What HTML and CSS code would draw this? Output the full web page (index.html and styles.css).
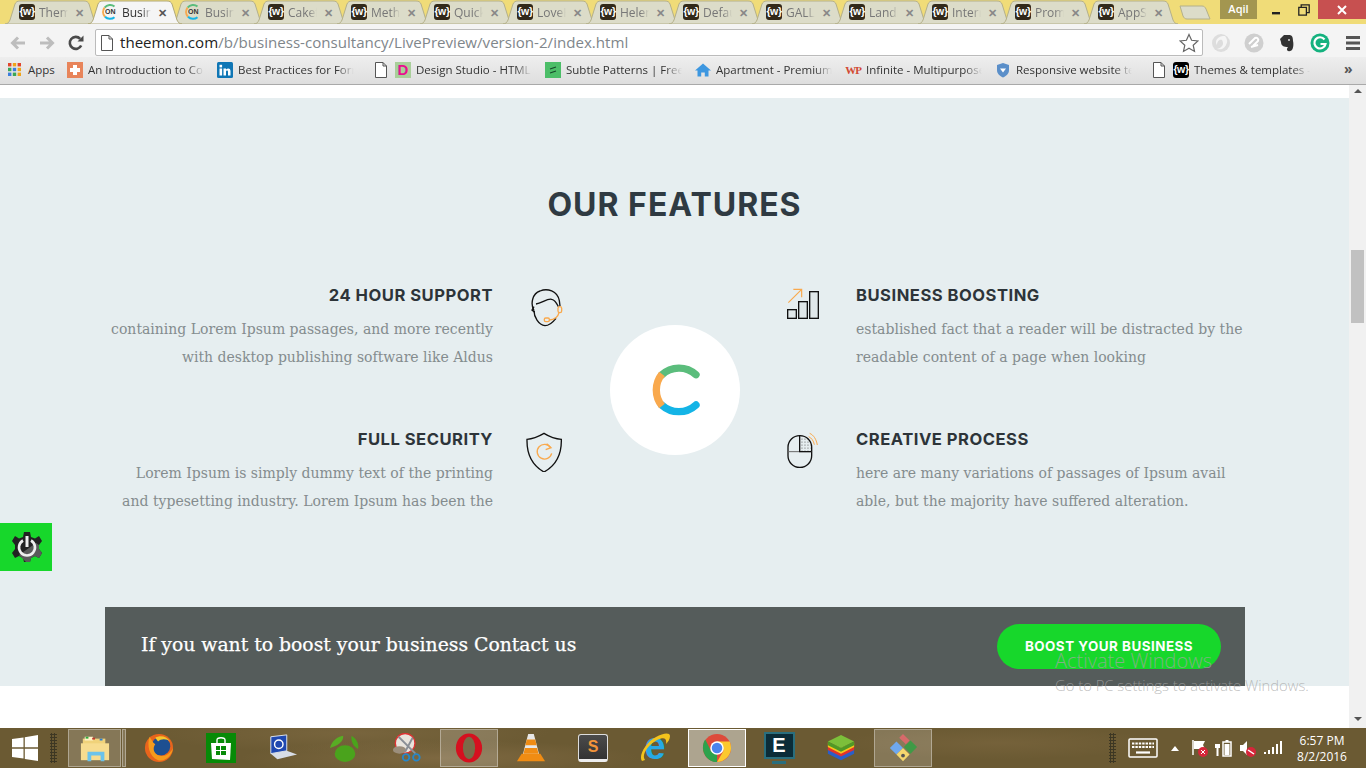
FILE: index.html
```html
<!DOCTYPE html>
<html lang="en">
<head>
<meta charset="utf-8">
<title>Business Consultancy</title>
<link rel="stylesheet" href="styles.css">
</head>
<body>
<svg class="defs" width="0" height="0" aria-hidden="true">
  <symbol id="tabshape" viewBox="0 0 94 24" preserveAspectRatio="none">
    <path d="M0 24 C3 24 4 22 5 20 L10 4 C11 2 12 1 15 1 H79 C82 1 83 2 84 4 L89 20 C90 22 91 24 94 24 Z"/>
  </symbol>
  <symbol id="doc" viewBox="0 0 12 16">
    <path d="M.5.5H8L11.5 4V15.5H.5Z M8 .5V4H11.5" fill="#fff" stroke="#555" stroke-width="1"/>
  </symbol>
  <symbol id="onlogo" viewBox="0 0 16 16">
    <path d="M12.5 2.600A7 7 0 0 0 2.600 3.600" fill="none" stroke="#5bbd7c" stroke-width="2"/>
    <path d="M2.600 3.600A7 7 0 0 0 3 12.800" fill="none" stroke="#f7a94f" stroke-width="2"/>
    <path d="M3 12.800A7 7 0 0 0 12.500 13.200" fill="none" stroke="#14b4e6" stroke-width="2"/>
  </symbol>
</svg>

<header class="chrome">
  <div class="tabstrip">
    <div class="tabs">
      <div class="tab"><svg class="tabbg"><use href="#tabshape"/></svg><span class="fav">{w}</span><span class="tlabel">Theme</span><span class="tclose">✕</span></div>
      <div class="tab active"><svg class="tabbg"><use href="#tabshape"/></svg><span class="fav on"><svg class="onsvg"><use href="#onlogo"/></svg><span class="ontext">ON</span></span><span class="tlabel">Busine</span><span class="tclose">✕</span></div>
      <div class="tab"><svg class="tabbg"><use href="#tabshape"/></svg><span class="fav on"><svg class="onsvg"><use href="#onlogo"/></svg><span class="ontext">ON</span></span><span class="tlabel">Busine</span><span class="tclose">✕</span></div>
      <div class="tab"><svg class="tabbg"><use href="#tabshape"/></svg><span class="fav">{w}</span><span class="tlabel">Cakef</span><span class="tclose">✕</span></div>
      <div class="tab"><svg class="tabbg"><use href="#tabshape"/></svg><span class="fav">{w}</span><span class="tlabel">Metho</span><span class="tclose">✕</span></div>
      <div class="tab"><svg class="tabbg"><use href="#tabshape"/></svg><span class="fav">{w}</span><span class="tlabel">Quick</span><span class="tclose">✕</span></div>
      <div class="tab"><svg class="tabbg"><use href="#tabshape"/></svg><span class="fav">{w}</span><span class="tlabel">LoveH</span><span class="tclose">✕</span></div>
      <div class="tab"><svg class="tabbg"><use href="#tabshape"/></svg><span class="fav">{w}</span><span class="tlabel">Helen</span><span class="tclose">✕</span></div>
      <div class="tab"><svg class="tabbg"><use href="#tabshape"/></svg><span class="fav">{w}</span><span class="tlabel">Defau</span><span class="tclose">✕</span></div>
      <div class="tab"><svg class="tabbg"><use href="#tabshape"/></svg><span class="fav">{w}</span><span class="tlabel">GALLE</span><span class="tclose">✕</span></div>
      <div class="tab"><svg class="tabbg"><use href="#tabshape"/></svg><span class="fav">{w}</span><span class="tlabel">Landi</span><span class="tclose">✕</span></div>
      <div class="tab"><svg class="tabbg"><use href="#tabshape"/></svg><span class="fav">{w}</span><span class="tlabel">Intern</span><span class="tclose">✕</span></div>
      <div class="tab"><svg class="tabbg"><use href="#tabshape"/></svg><span class="fav">{w}</span><span class="tlabel">Prom</span><span class="tclose">✕</span></div>
      <div class="tab"><svg class="tabbg"><use href="#tabshape"/></svg><span class="fav">{w}</span><span class="tlabel">AppS</span><span class="tclose">✕</span></div>
      <svg class="newtab" viewBox="0 0 32 15"><path d="M1 1H23C25 1 26 2 27 4L31 14H8C6 14 5 13 4 11Z"/></svg>
    </div>
    <div class="winbar">
      <span class="user">Aqil</span>
      <span class="winbtn minbtn"><svg width="10" height="10" viewBox="0 0 10 10"><rect x="1" y="7" width="8" height="2.400" fill="#222"/></svg></span>
      <span class="winbtn maxbtn"><svg width="12" height="12" viewBox="0 0 12 12"><path d="M.8 3.400H8.400V11.200H.8Z M3.200 3.400V.8H11.200V8.600H8.400" fill="none" stroke="#222" stroke-width="1.300"/></svg></span>
      <span class="winbtn closebtn"><svg width="10" height="10" viewBox="0 0 10 10"><path d="M1 1L9 9M9 1L1 9" stroke="#fff" stroke-width="2"/></svg></span>
    </div>
  </div>

  <div class="toolbar">
    <svg class="navicon" viewBox="0 0 18 18"><path d="M16 9H4M9 3.500L3.500 9L9 14.500" fill="none" stroke="#bdbdbd" stroke-width="3"/></svg>
    <svg class="navicon" viewBox="0 0 18 18"><path d="M2 9H14M9 3.500L14.500 9L9 14.500" fill="none" stroke="#bdbdbd" stroke-width="3"/></svg>
    <svg class="navicon" viewBox="0 0 18 18"><path d="M14.200 11.500A6 6 0 1 1 13.200 4.800" fill="none" stroke="#4a4a4a" stroke-width="2.600"/><path d="M10.500 7.500H16.500V1.500Z" fill="#4a4a4a"/></svg>
    <div class="omnibox">
      <svg class="omnidoc"><use href="#doc"/></svg>
      <span class="url"><span class="host">theemon.com</span>/b/business-consultancy/LivePreview/version-2/index.html</span>
      <svg class="star" viewBox="0 0 20 20"><path d="M10 1.500L12.600 7.300L18.900 8L14.200 12.200L15.500 18.400L10 15.200L4.500 18.400L5.800 12.200L1.100 8L7.400 7.300Z" fill="#fff" stroke="#666" stroke-width="1.200"/></svg>
    </div>
    <div class="exts">
      <svg class="ext" viewBox="0 0 20 20"><circle cx="10" cy="10" r="9" fill="#ddd"/><path d="M14 3A8 8 0 0 1 6 16C10 15 14 12 11 7C8 6 6 9 6 12C3 8 7 2 14 3Z" fill="#f5f5f5"/></svg>
      <svg class="ext" viewBox="0 0 20 20"><circle cx="10" cy="10" r="9.500" fill="#cfcfcf"/><path d="M5 11L11 5C13 4 15 6 14 8L9 13M7 14L14 12" fill="none" stroke="#fff" stroke-width="2"/></svg>
      <svg class="ext" viewBox="0 0 20 20"><path d="M3 6L7 2H12C15 2 16 4 16 8C17 12 16 18 13 18C10 19 9 16 11 14C7 14 4 13 4 9Z" fill="#333"/><circle cx="12" cy="7" r="1" fill="#ddd"/></svg>
      <svg class="ext" viewBox="0 0 20 20"><circle cx="10" cy="10" r="9.500" fill="#15b27f"/><path d="M14.500 6.500A5.600 5.600 0 1 0 15.500 11H10.500" fill="none" stroke="#fff" stroke-width="2.200"/></svg>
      <svg class="ext" viewBox="0 0 20 20"><path d="M3 4.500H17M3 10H17M3 15.500H17" stroke="#555" stroke-width="3"/></svg>
    </div>
  </div>

  <nav class="bookmarks">
    <div class="bm bm-apps">
      <svg class="appsgrid" viewBox="0 0 13 13"><rect width="3.400" height="3.400" fill="#e2452c"/><rect x="4.800" width="3.400" height="3.400" fill="#f0a419"/><rect x="9.600" width="3.400" height="3.400" fill="#e2452c"/><rect y="4.800" width="3.400" height="3.400" fill="#3aa655"/><rect x="4.800" y="4.800" width="3.400" height="3.400" fill="#3b7ddd"/><rect x="9.600" y="4.800" width="3.400" height="3.400" fill="#f0a419"/><rect y="9.600" width="3.400" height="3.400" fill="#3b7ddd"/><rect x="4.800" y="9.600" width="3.400" height="3.400" fill="#3aa655"/><rect x="9.600" y="9.600" width="3.400" height="3.400" fill="#f0a419"/></svg>
      <span class="bmapps">Apps</span>
    </div>
    <div class="bm"><svg class="bmicon" viewBox="0 0 16 16"><rect width="16" height="16" fill="#e8845a"/><path d="M6 3H10V6H13V10H10V13H6V10H3V6H6Z" fill="#fff"/></svg><span class="bmlabel">An Introduction to Color</span></div>
    <div class="bm"><svg class="bmicon" viewBox="0 0 16 16"><rect width="16" height="16" rx="1.500" fill="#0f76b5"/><rect x="2.500" y="6.500" width="2.600" height="7" fill="#fff"/><rect x="2.500" y="2.800" width="2.600" height="2.600" fill="#fff"/><path d="M6.500 6.500H9V7.600C10.500 5.800 13.500 6 13.500 9V13.500H11V9.600C11 8 9 8 9 9.600V13.500H6.500Z" fill="#fff"/></svg><span class="bmlabel">Best Practices for Form</span></div>
    <div class="bm bm-doc"><svg class="bmdoc"><use href="#doc"/></svg></div>
    <div class="bm"><span class="bmicon dicon">D</span><span class="bmlabel">Design Studio - HTML</span></div>
    <div class="bm"><svg class="bmicon" viewBox="0 0 16 16"><rect width="16" height="16" fill="#4cbe68"/><path d="M5 7L11 5M5 11L11 9" stroke="#17482a" stroke-width="1.200"/></svg><span class="bmlabel">Subtle Patterns | Free Pat</span></div>
    <div class="bm"><svg class="bmicon" viewBox="0 0 16 16"><path d="M8 1.500L16 8.500H13.500V14.500H9.800V10.500H6.200V14.500H2.500V8.500H0Z" fill="#3d97e0"/></svg><span class="bmlabel">Apartment - Premium</span></div>
    <div class="bm"><span class="bmicon wpicon">WP</span><span class="bmlabel">Infinite - Multipurpose</span></div>
    <div class="bm"><svg class="bmicon" viewBox="0 0 16 16"><path d="M8 1L14 3V8C14 12 11 14 8 15.500C5 14 2 12 2 8V3Z" fill="#5b8fc9"/><path d="M5 6.500H11L8 10.500Z" fill="#fff"/></svg><span class="bmlabel">Responsive website tem</span></div>
    <div class="bm bm-doc"><svg class="bmdoc"><use href="#doc"/></svg></div>
    <div class="bm"><span class="fav black">{w}</span><span class="bmlabel wlabel">Themes &amp; templates - W</span></div>
    <span class="more">»</span>
  </nav>
</header>

<div class="viewport">
  <main class="page">
    <section class="features">
      <h2 class="title">OUR FEATURES</h2>
      <div class="fgrid">
        <div class="ftext left r1">
          <h3>24 HOUR SUPPORT</h3>
          <p>containing Lorem Ipsum passages, and more recently<br>with desktop publishing software like Aldus</p>
        </div>
        <div class="ficon ficon-l r1">
          <svg viewBox="45 54 120 120" class="fsvg"><g fill="none" stroke="#111" stroke-width="4"><path d="M72 122C60 100 68 70 90 63C112 54 142 62 148 92L150 108"/><path d="M72 122C72 140 85 165 105 167C120 167 130 155 138 145"/><path d="M78 102C95 100 113 84 125 88C136 90 140 100 145 110"/><path d="M72 110L66 120L74 127"/></g><g fill="none" stroke="#f9a94d" stroke-width="4"><rect x="144" y="110" width="11" height="18" rx="5"/><path d="M147 128C144 141 136 149 118 150"/><rect x="103" y="144" width="15" height="11" rx="4"/></g></svg>
        </div>
        <div class="fcenter">
          <svg viewBox="300 165 390 390" class="flogo"><circle cx="495" cy="360" r="195" fill="#fff"/><g fill="none" stroke-width="22"><path d="M558 314A76 76 0 0 0 455 315" stroke="#5bbd7c" stroke-linecap="round"/><path d="M558 405A76 76 0 0 1 455 405" stroke="#14b4e6" stroke-linecap="round"/><path d="M456 312A76 76 0 0 0 456 408" stroke="#f9a94d"/></g></svg>
        </div>
        <div class="ficon ficon-r r1">
          <svg viewBox="819 54 120 120" class="fsvg"><g fill="#dfe7e9" stroke="#111" stroke-width="4"><rect x="833" y="119" width="26" height="26"/><rect x="866" y="95" width="26" height="50"/><rect x="899" y="65" width="26" height="80"/></g><path d="M835 98L875 58M850 58H875V82" fill="none" stroke="#f9a94d" stroke-width="3.500"/></svg>
        </div>
        <div class="ftext r1">
          <h3>BUSINESS BOOSTING</h3>
          <p>established fact that a reader will be distracted by the<br>readable content of a page when looking</p>
        </div>
        <div class="ftext left r2">
          <h3>FULL SECURITY</h3>
          <p>Lorem Ipsum is simply dummy text of the printing<br>and typesetting industry. Lorem Ipsum has been the</p>
        </div>
        <div class="ficon ficon-l r2">
          <svg viewBox="45 486 120 120" class="fsvg"><path d="M102 490C85 500 68 507 51 508C50 550 65 585 102 606C140 585 155 550 154 508C135 507 118 500 102 490Z" fill="none" stroke="#111" stroke-width="4"/><path d="M122 533A22 22 0 1 0 125 550" fill="none" stroke="#f9a94d" stroke-width="4"/><path d="M110 521L123 533L107 539" fill="none" stroke="#f9a94d" stroke-width="4"/></svg>
        </div>
        <div class="ficon ficon-r r2">
          <svg viewBox="819 486 120 120" class="fsvg"><defs><pattern id="dots" width="9" height="9" patternUnits="userSpaceOnUse"><circle cx="3" cy="3" r="1.600" fill="#444"/></pattern></defs><path d="M870 498C890 498 904 512 904 545H870Z" fill="url(#dots)"/><rect x="834" y="497" width="71" height="95" rx="35" fill="none" stroke="#111" stroke-width="4"/><path d="M834 545H905" stroke="#666" stroke-width="3"/><path d="M869 497V545H905" fill="none" stroke="#111" stroke-width="4"/><path d="M896 500C905 504 911 513 913 524M899 490C911 495 919 508 922 525" fill="none" stroke="#f9a94d" stroke-width="3"/></svg>
        </div>
        <div class="ftext r2">
          <h3>CREATIVE PROCESS</h3>
          <p>here are many variations of passages of Ipsum avail<br>able, but the majority have suffered alteration.</p>
        </div>
      </div>
      <div class="cta">
        <p class="ctatext">If you want to boost your business Contact us</p>
        <a class="ctabtn">BOOST YOUR BUSINESS</a>
      </div>
    </section>
  </main>
  <aside class="scrollbar">
    <span class="sarrow up"></span>
    <span class="sthumb"></span>
    <span class="sarrow down"></span>
  </aside>
  <div class="gearwidget">
    <svg viewBox="0 0 32 32" class="gearsvg"><path d="M13 1H19L20 6L24 7.500L28 5L31 10L28 14V18L31 22L28 27L24 25L20 27L19 31H13L12 27L8 25L4 27L1 22L4 18V14L1 10L4 5L8 7.500L12 6Z" fill="#222"/><path d="M25 12L28 14V18L31 22L28 27L24 25L20 27L19 31H15L8 24Z" fill="#5a5a5a"/><path d="M12 9.500A8 8 0 1 0 20 9.500" fill="none" stroke="#eee" stroke-width="2.600"/><rect x="14.500" y="5" width="3" height="11" fill="#eee"/></svg>
  </div>
</div>

<footer class="taskbar">
  <svg class="winlogo" viewBox="0 0 26 26"><path d="M0 4L11.500 2.400V12.300H0ZM12.800 2.200L26 0V12.300H12.800ZM0 13.700H11.500V23.600L0 22ZM12.800 13.700H26V26L12.800 24Z" fill="#fff"/></svg>
  <span class="grip"></span>
  <span class="tbox explorer">
    <svg class="tbicon" viewBox="0 0 32 32"><path d="M3 6H27V27H3Z" fill="#f0d27a"/><path d="M5 4H14V8H5Z" fill="#fff3c8"/><rect x="6" y="4" width="3" height="2" fill="#2faa3c"/><rect x="13" y="5" width="3" height="2" fill="#c0392b"/><rect x="21" y="6" width="3" height="2" fill="#2b7fd0"/><path d="M1 11H31V29H1Z" fill="#f7dc8f"/><path d="M8 20H26V30H22V24H12V30H8Z" fill="#6cc3ea"/></svg>
  </span>
  <span class="tbox narrow"></span>
  <span class="slot"><svg class="tbicon" viewBox="0 0 32 32"><circle cx="16" cy="16" r="15" fill="#e8641c"/><circle cx="18" cy="14" r="10" fill="#1d4f91"/><path d="M6 4C3 12 5 25 15 29C24 31 30 23 31 16C28 22 22 26 16 24C10 22 9 16 12 12C9 10 8 7 6 4Z" fill="#f59b1d"/><path d="M12 5C17 2 24 3 28 9C24 6 18 6 15 9Z" fill="#f7c52d"/></svg></span>
  <span class="slot"><svg class="tbicon" viewBox="0 0 30 30"><rect width="30" height="30" fill="#078a07"/><path d="M11 11V7C11 4 19 4 19 7V11" fill="none" stroke="#fff" stroke-width="1.400"/><path d="M5 10H25L24 27L6 26Z" fill="#fff"/><path d="M10 13H14V17H10ZM15 13H20V17H15ZM10 18H14V22H10ZM15 18H20V22H15Z" fill="#078a07"/></svg></span>
  <span class="slot"><svg class="tbicon" viewBox="0 0 32 32"><path d="M3 4L20 2V19L3 22Z" fill="#1f48b0" stroke="#dfe6f2"/><circle cx="11.500" cy="12" r="4.500" fill="none" stroke="#fff" stroke-width="1.500"/><path d="M3 22L20 19L31 23L10 28Z" fill="#d8dde6"/></svg></span>
  <span class="slot"><svg class="tbicon" viewBox="0 0 32 32"><ellipse cx="16" cy="22" rx="11" ry="9" fill="#4aa31c"/><path d="M0 16C2 8 8 4 14 3C15 9 8 14 0 16Z" fill="#58ad24"/><path d="M23 3C28 6 31 11 30 17C25 15 22 9 23 3Z" fill="#4aa31c"/></svg></span>
  <span class="slot"><svg class="tbicon" viewBox="0 0 32 32"><circle cx="14" cy="11" r="10.500" fill="#e8e4dc" stroke="#d33" stroke-width="1.500"/><ellipse cx="8" cy="18" rx="7" ry="4" fill="#9b8e7c"/><path d="M7 4L25 22M22 5L14 20" stroke="#8a8f96" stroke-width="2"/><circle cx="15" cy="26" r="3.500" fill="none" stroke="#2787c9" stroke-width="2"/><circle cx="26" cy="26" r="3.500" fill="none" stroke="#2787c9" stroke-width="2"/></svg></span>
  <span class="slot"><span class="tbox wide58"><svg class="tbicon" viewBox="0 0 32 32"><ellipse cx="16" cy="16" rx="14" ry="15.500" fill="#d5101f"/><ellipse cx="16" cy="16" rx="6.500" ry="12" fill="#7a6a48"/></svg></span></span>
  <span class="slot"><svg class="tbicon" viewBox="0 0 32 32"><path d="M13 1H19L25 24H7Z" fill="#e8e8e8"/><path d="M11.500 7H20.500L22 13H10ZM9.500 16H22.500L24 22H8Z" fill="#f08c13"/><path d="M6 22H26L31 30H1Z" fill="#f08c13"/></svg></span>
  <span class="slot"><span class="sublime"><span class="sublimes">S</span></span></span>
  <span class="slot"><span class="ielogo"><span class="ielet">e</span><svg class="iering" viewBox="0 0 32 32"><path d="M3 29C-1 24 7 10 17 5C24 1 31 0 31 4C31 7 29 10 27 12C28 6 25 5 18 8C9 13 2 23 6 28Z" fill="#f3c31d"/></svg></span></span>
  <span class="slot"><span class="tbox wide58 bright"><svg class="tbicon" viewBox="0 0 32 32"><circle cx="16" cy="16" r="15" fill="#dd4b3a"/><path d="M3.500 24L16 16L16 31C11 31 6 28 3.500 24Z" fill="#2ca24c"/><path d="M1 16C1 12 2 9 3.500 7L9.500 19L16 31C8 31 1 24 1 16Z" fill="#2ca24c"/><path d="M16 9H29.500C31 12 31 16 31 16C31 24 24 31 16 31L23 19Z" fill="#fbc92f"/><circle cx="16" cy="16" r="7.200" fill="#fff"/><circle cx="16" cy="16" r="5.600" fill="#4b84ed"/></svg></span></span>
  <span class="slot"><span class="emon"><span class="emonscreen">E</span><span class="emonbase"></span></span></span>
  <span class="slot"><svg class="tbicon" viewBox="0 0 32 32"><path d="M16 22L30 16V22L16 29L2 22V16Z" fill="#2a5ec9"/><path d="M16 19L30 13V18L16 25L2 18V13Z" fill="#e2322b"/><path d="M16 16L30 10V15L16 22L2 15V10Z" fill="#f7c61b"/><path d="M16 2L30 9L16 16L2 9Z" fill="#7cbf3a"/><path d="M16 16L30 9V13L16 20L2 13V9Z" fill="#4f9a26"/></svg></span>
  <span class="slot"><span class="tbox wide58"><svg class="tbicon" viewBox="0 0 32 32"><path d="M2 16L9 9L16 16L9 23Z" fill="#6fa8f0"/><path d="M12 5L16 1L23 8L19 12Z" fill="#d66a6a"/><path d="M17 15L24 8L31 15L24 22Z" fill="#3f9a46"/><path d="M9 23L16 16L23 23L16 30Z" fill="#f5d76e"/><circle cx="16" cy="24" r="2" fill="#555"/></svg></span></span>

  <div class="tray">
    <span class="grip"></span>
    <svg class="kbd" viewBox="0 0 30 20"><rect x="1" y="1" width="28" height="18" rx="1" fill="none" stroke="#fff" stroke-width="1.500"/><path d="M4 5.500H26M4 9H26" stroke="#fff" stroke-width="2.200" stroke-dasharray="2.400 1"/><path d="M8 14.500H22" stroke="#fff" stroke-width="2.200"/></svg>
    <span class="trayup"></span>
    <span class="trayslot"><svg class="tr" viewBox="0 0 20 20"><path d="M3 2V17" stroke="#fff" stroke-width="1.500"/><path d="M4 3H15L13 7L15 11H4Z" fill="#fff"/><circle cx="13" cy="14" r="5" fill="#d6263a"/><path d="M11 12L15 16M15 12L11 16" stroke="#fff"/></svg></span>
    <span class="trayslot"><svg class="tr" viewBox="0 0 20 20"><path d="M2 2V6M5 2V6M1 6H6V10H4.500V18H2.500V10H1Z" fill="#fff"/><rect x="9" y="4" width="8" height="14" fill="none" stroke="#fff" stroke-width="1.500"/><rect x="11.500" y="2" width="3" height="2" fill="#fff"/><rect x="10.500" y="6" width="5" height="11" fill="#fff"/></svg></span>
    <span class="trayslot"><svg class="tr" viewBox="0 0 20 20"><path d="M2 7H5L9 3V17L5 13H2Z" fill="#fff"/><circle cx="13" cy="14" r="5" fill="#d6263a"/><path d="M10 12L16 16" stroke="#fff" stroke-width="1.500"/></svg></span>
    <span class="trayslot"><svg class="tr" viewBox="0 0 20 20"><path d="M2 14H4V16H2ZM6 12H8V16H6ZM10 9H12V16H10ZM14 6H16V16H14ZM18 3H20V16H18Z" fill="#fff"/></svg></span>
    <div class="clock"><span>6:57 PM</span><span>8/2/2016</span></div>
  </div>
</footer>

<div class="activate">
  <span class="act1">Activate Windows</span>
  <span class="act2">Go to PC settings to activate Windows.</span>
</div>
</body>
</html>
```
FILE: styles.css
```css
* { box-sizing: border-box; }
html, body { margin: 0; padding: 0; }
body {
  position: relative;
  width: 1366px;
  height: 768px;
  overflow: hidden;
  display: flex;
  flex-direction: column;
  font-family: "Open Sans", "Noto Sans", sans-serif;
  background: #fff;
}
.defs { position: absolute; }

/* browser chrome */
.chrome { flex: none; }
.tabstrip {
  height: 24px;
  background: #f0dc78;
  display: flex;
  justify-content: space-between;
  overflow: hidden;
}
.tabs { display: flex; padding-left: 5px; }
.tab {
  position: relative;
  flex: none;
  width: 94px;
  height: 24px;
  margin-right: -11px;
  padding-left: 14px;
  display: flex;
  align-items: center;
  font-size: 12px;
  color: #777;
}
.tab.active { z-index: 2; color: #333; }
.tabbg {
  position: absolute;
  left: 0; top: 0;
  width: 94px; height: 24px;
  fill: #dcdcc9;
  stroke: #b4b08a;
  stroke-width: 1;
}
.tab.active .tabbg { fill: #f5f5f5; stroke: #b0a878; }
.fav {
  position: relative;
  flex: none;
  width: 16px; height: 16px;
  border-radius: 3px;
  background: #32291a;
  color: #fff;
  font: bold 10.500px/15px "Liberation Sans", sans-serif;
  letter-spacing: -0.4px;
  text-align: center;
}
.fav.black { background: #000; }
.fav.on { background: none; color: #333; }
.onsvg { position: absolute; left: 0; top: 0; width: 16px; height: 16px; }
.ontext {
  position: absolute;
  left: 3px; top: 0;
  font: bold 7px/16px "Liberation Sans", sans-serif;
  letter-spacing: 0;
}
.tlabel {
  position: relative;
  width: 29px;
  margin-left: 4px;
  overflow: hidden;
  white-space: nowrap;
  -webkit-mask-image: linear-gradient(90deg, #000 70%, transparent 100%);
  mask-image: linear-gradient(90deg, #000 70%, transparent 100%);
}
.tclose {
  position: relative;
  margin-left: 7px;
  font-size: 11px;
  font-weight: 700;
  color: #888;
}
.tab.active .tclose { color: #555; }
.newtab { width: 32px; height: 15px; margin: 5px 0 0 12px; fill: #dcdcc9; stroke: #b4b08a; }
.winbar { display: flex; align-items: flex-start; }
.user {
  width: 37px; height: 19px;
  background: #a39650;
  color: #fff;
  font-size: 11px;
  font-weight: 600;
  line-height: 18px;
  text-align: center;
  margin-right: 5px;
}
.winbtn {
  height: 19px;
  display: flex;
  align-items: center;
  justify-content: center;
}
.minbtn, .maxbtn { width: 28px; }
.closebtn { width: 48px; background: #c75050; margin-left: 0; }

.toolbar {
  height: 33px;
  background: #f4f4f4;
  display: flex;
  align-items: center;
  padding-top: 4px;
  padding-left: 3px;
}
.navicon { width: 18px; height: 18px; margin: 0 5.500px; flex: none; }
.omnibox {
  flex: none;
  width: 1108px;
  height: 27px;
  margin-left: 5px;
  background: #fff;
  border: 1px solid #bbb;
  border-radius: 2px;
  display: flex;
  align-items: center;
  padding-left: 5px;
}
.omnidoc { width: 12px; height: 16px; flex: none; }
.url {
  margin-left: 7px;
  padding-bottom: 2px;
  flex: 1;
  font-size: 15.100px;
  color: #80868b;
  white-space: nowrap;
}
.host { color: #222; }
.star { width: 20px; height: 20px; margin-right: 3px; flex: none; }
.exts { display: flex; margin-left: 8px; }
.ext { width: 20px; height: 20px; margin-right: 13px; flex: none; }

.bookmarks {
  position: relative;
  height: 28px;
  background: linear-gradient(#eeeeee, #dedede);
  border-bottom: 1px solid #a9a9a9;
  display: flex;
  align-items: center;
  padding: 0 0 2px 8px;
  font-size: 11.500px;
  color: #333;
}
.bm { display: flex; align-items: center; width: 150px; flex: none; }
.bm-apps { width: 59px; }
.bm-doc { width: 28px; justify-content: center; }
.appsgrid { width: 13px; height: 13px; flex: none; }
.bmapps { margin-left: 7px; }
.bmicon { width: 16px; height: 16px; flex: none; }
.bmdoc { width: 12px; height: 16px; }
.dicon {
  background: #a9cf9a;
  color: #e8108f;
  font: bold 15px/16px "Liberation Sans", sans-serif;
  text-align: center;
}
.wpicon {
  color: #d24a34;
  font: bold 11px/16px "Liberation Serif", serif;
  letter-spacing: -1px;
  text-align: center;
}
.bmlabel {
  width: 116px;
  margin-left: 5px;
  overflow: hidden;
  white-space: nowrap;
  -webkit-mask-image: linear-gradient(90deg, #000 85%, transparent 100%);
  mask-image: linear-gradient(90deg, #000 85%, transparent 100%);
}
.more {
  position: absolute;
  left: 1344px; top: 2px;
  font-size: 14px;
  font-weight: 700;
  color: #555;
}

/* page */
.viewport {
  position: relative;
  flex: 1;
  display: flex;
  min-height: 0;
}
.page { flex: 1; padding-top: 13px; background: #fff; min-width: 0; }
.features {
  height: 588px;
  background: #e6eef0;
  padding-top: 87px;
}
.title {
  margin: 0;
  text-align: center;
  font: 700 32px/40px Inter, sans-serif;
  letter-spacing: 1px;
  color: #2f3a42;
}
.fgrid {
  display: grid;
  width: 1140px;
  margin: 58px 0 0 105px;
  grid-template-columns: 388px 117px 130px 116px 389px;
  grid-template-rows: 88px 88px;
  row-gap: 56px;
}
.ftext h3 {
  margin: 0 0 8px;
  font: 700 16.600px/24px Inter, sans-serif;
  letter-spacing: 0.5px;
  color: #2d3439;
}
.ftext p {
  margin: 0;
  font: 400 14px/28px "DejaVu Serif", serif;
  color: #848c8e;
}
.ftext.left { text-align: right; }
.r1 { grid-row: 1; }
.r2 { grid-row: 2; }
.ficon { display: flex; padding-top: 5px; justify-content: center; }
.ficon-l { padding-right: 13px; }
.ficon-r { padding-left: 10px; }
.fsvg { width: 40px; height: 40px; }
.fcenter { grid-column: 3; grid-row: 1 / span 2; padding-top: 42px; }
.flogo { display: block; width: 130px; height: 130px; }
.cta {
  width: 1140px;
  height: 79px;
  margin: 92px 0 0 105px;
  background: #555c5b;
  position: relative;
  display: flex;
  justify-content: space-between;
  padding: 17px 24px 0 36px;
}
.ctatext {
  margin: 0;
  font: 400 18.800px/41px "DejaVu Serif", serif;
  -webkit-text-stroke: 0.25px #fff;
  color: #fff;
}
.ctabtn {
  width: 224px;
  height: 45px;
  border-radius: 23px;
  background: #17d72b;
  color: #fff;
  font: 700 13.400px/45px Inter, sans-serif;
  letter-spacing: 0.5px;
  text-align: center;
}
.scrollbar {
  flex: none;
  width: 17px;
  background: #f1f1f1;
  display: flex;
  flex-direction: column;
  align-items: center;
  position: relative;
}
.sthumb {
  width: 13px;
  height: 73px;
  margin-top: 157px;
  background: #c1c1c1;
}
.sarrow { width: 0; height: 0; border-left: 4px solid transparent; border-right: 4px solid transparent; }
.sarrow.up { border-bottom: 4px solid #555; margin-top: 4px; }
.sarrow.down { border-top: 4px solid #555; margin-top: auto; margin-bottom: 7px; }
.gearwidget {
  position: absolute;
  left: 0; top: 438px;
  width: 52px; height: 48px;
  background: #17d72b;
  display: flex;
  align-items: center;
  justify-content: center;
  padding-left: 2px;
}
.gearsvg { width: 32px; height: 32px; }

/* taskbar */
.taskbar {
  flex: none;
  height: 40px;
  display: flex;
  align-items: center;
  padding-left: 12px;
  background:
    radial-gradient(ellipse 200px 18px at 440px 30px, rgba(160,130,90,.35), transparent),
    radial-gradient(ellipse 160px 16px at 1000px 15px, rgba(140,115,75,.3), transparent),
    radial-gradient(ellipse 200px 20px at 350px 5px, rgba(150,125,85,.3), transparent),
    #6b5a33;
}
.winlogo { width: 26px; height: 26px; flex: none; }
.grip {
  flex: none;
  width: 7px;
  height: 30px;
  margin-left: 12px;
  background-image: radial-gradient(circle, #3d3723 1px, transparent 1.200px);
  background-size: 3px 3px;
}
.tbox {
  height: 38px;
  display: flex;
  align-items: center;
  justify-content: center;
  background: rgba(255,255,255,.18);
  border: 1px solid rgba(255,255,255,.35);
  flex: none;
}
.explorer { width: 53px; margin-left: 11px; }
.narrow { width: 4px; margin: 0 2px 0 1px; }
.wide58 { width: 58px; }
.bright { background: rgba(255,255,255,.45); border: 1px solid #fff; }
.slot {
  flex: none;
  width: 62px;
  display: flex;
  align-items: center;
  justify-content: center;
}
.tbicon { width: 30px; height: 30px; flex: none; }
.sublime {
  width: 30px; height: 28px;
  background: linear-gradient(#4b4b4b, #333);
  border: 1px solid #ddd;
  border-bottom: 3px solid #eee;
  border-radius: 3px;
  display: flex;
  align-items: center;
  justify-content: center;
}
.sublimes { color: #f2943a; font: 700 16px/1 "Liberation Sans", sans-serif; }
.ielogo {
  position: relative;
  width: 32px; height: 32px;
  display: flex;
  align-items: center;
  justify-content: center;
}
.ielet {
  color: #27a9e6;
  font: 700 38px/32px "Liberation Sans", sans-serif;
  margin-top: -5px;
}
.iering { position: absolute; left: 0; top: 0; width: 32px; height: 32px; }
.emon {
  display: flex;
  flex-direction: column;
  align-items: center;
}
.emonscreen {
  width: 31px; height: 27px;
  background: #0b2c38;
  border: 2px solid #2a6e7d;
  color: #fff;
  font: 700 20px/23px "Liberation Sans", sans-serif;
  text-align: center;
}
.emonbase { width: 14px; height: 3px; margin-top: 2px; background: #2a6e7d; }
.tray {
  margin-left: auto;
  display: flex;
  align-items: center;
  width: 257px;
}
.tray .grip { margin-left: 0; }
.kbd { width: 30px; height: 20px; margin-left: 12px; flex: none; }
.trayup {
  width: 0; height: 0;
  margin: 0 9px 0 13px;
  border-left: 4px solid transparent;
  border-right: 4px solid transparent;
  border-bottom: 5px solid #fff;
}
.trayslot { width: 24px; display: flex; justify-content: center; }
.tr { width: 20px; height: 20px; }
.clock {
  width: 76px;
  padding-top: 2px;
  display: flex;
  flex-direction: column;
  align-items: center;
  color: #fff;
  font-size: 12px;
  line-height: 16px;
}

/* watermark */
.activate {
  position: absolute;
  left: 1055px; top: 648px;
  display: flex;
  flex-direction: column;
  color: rgba(165,165,165,.73);
  font-family: "Open Sans", sans-serif;
  font-weight: 300;
  pointer-events: none;
  white-space: nowrap;
}
.act1 { font-size: 20px; line-height: 26px; }
.act2 { font-size: 14.800px; line-height: 22px; }
```
